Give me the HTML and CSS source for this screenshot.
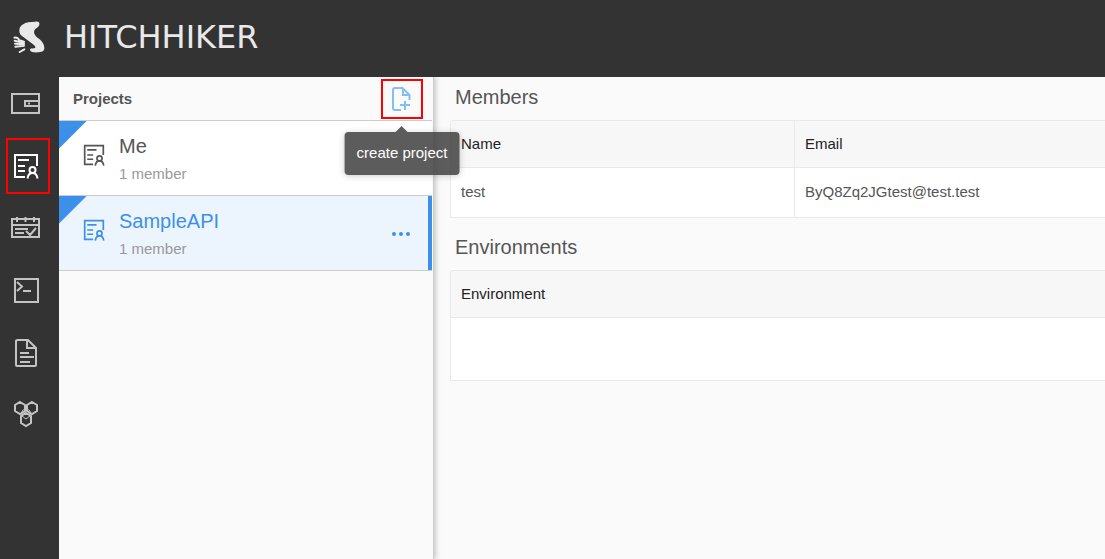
FILE: index.html
```html
<!DOCTYPE html>
<html lang="en">
<head>
<meta charset="utf-8">
<title>Hitchhiker</title>
<link rel="stylesheet" href="styles.css">
</head>
<body>
<svg class="defs" aria-hidden="true">
  <symbol id="project" viewBox="0 0 26 26">
    <path d="M12 24H2V2H24V13M5 7H16M5 13H12M5 18H12"/>
    <circle cx="19.500" cy="17" r="3"/>
    <path d="M14.500 25.500C15 22 17 20 19.500 20S24 22 24.500 25.500"/>
  </symbol>
</svg>
<header class="header">
  <svg class="logo" viewBox="38 29 96 99" aria-hidden="true">
    <path d="M57 58C56 41 73 31 104 31C116 30 118 33 117 40C116 46 111 48 105 53C98 60 101 72 113 80C124 88 131 97 132 108C133 119 127 122 115 123C103 124 91 123 89 117C88 111 95 112 102 111C108 109 105 105 98 99L66 75C60 70 57 66 57 58Z"/>
    <path class="fingers" d="M42 79Q52 77 57 87L71 91M43 88L71 95M44 97L71 99M45 106L71 103M58 122L72 114"/>
  </svg>
  <span class="brand">HITCHHIKER</span>
</header>
<div class="body">
  <nav class="nav">
    <button class="nav-item" aria-label="Collections"><svg width="30" height="22" viewBox="0 0 30 22"><path d="M1 1H28V20H1ZM28 8H14V13H28"/><path d="M17 10.500H19"/></svg></button>
    <button class="nav-item active" aria-label="Projects"><svg width="26" height="26"><use href="#project"/></svg></button>
    <button class="nav-item" aria-label="Schedule"><svg width="30" height="22" viewBox="0 0 30 22"><path d="M1 2H28V20H1ZM1 8H28M6 0V5M14.500 0V5M23 0V5M4 12H17M4 16H13M15 14L19 18L25 11"/></svg></button>
    <button class="nav-item" aria-label="Stress test"><svg width="26" height="26" viewBox="0 0 26 26"><path d="M2 2H25V25H2ZM4 5L9 9.500L4 14M10 14H18"/></svg></button>
    <button class="nav-item" aria-label="Documents"><svg width="23" height="29" viewBox="0 0 23 29"><path d="M3 2H13L21 10V27Q21 28 20 28H2Q1 28 1 27V3Q1 2 3 2ZM12 2V10H21M5 15H14M5 19H19M5 24H15"/></svg></button>
    <button class="nav-item" aria-label="Community"><svg width="28" height="28" viewBox="0 0 28 28"><path d="M8 2L13 5V11L8 14L3 11V5ZM20 2L25 5V11L20 14L15 11V5ZM14 13L19 16V23L14 26L9 23V16Z"/><path class="thin" d="M10 16V11L14 8L18 11V16L14 19Z"/></svg></button>
  </nav>
  <aside class="panel">
    <div class="panel-head">
      <h1 class="panel-title">Projects</h1>
      <div class="create-wrap">
        <button class="create" aria-label="create project" aria-describedby="create-tip"><svg width="20" height="24" viewBox="0 0 20 24"><path d="M9 23H3Q1 23 1 21V3Q1 1 3 1H10.500L17.500 8V13M11 1V8H18M13 14V23M8 18H18"/></svg></button>
        <div class="tooltip" id="create-tip" role="tooltip">create project</div>
      </div>
    </div>
    <ul class="projects">
      <li class="project">
        <svg class="project-icon" width="22" height="22"><use href="#project"/></svg>
        <div class="project-text"><div class="project-name">Me</div><div class="project-info">1 member</div></div>
      </li>
      <li class="project selected">
        <svg class="project-icon" width="22" height="22"><use href="#project"/></svg>
        <div class="project-text"><div class="project-name">SampleAPI</div><div class="project-info">1 member</div></div>
        <button class="more" aria-label="More"><svg width="20" height="4" viewBox="0 0 20 4"><circle cx="3" cy="2" r="2"/><circle cx="10" cy="2" r="2"/><circle cx="17" cy="2" r="2"/></svg></button>
      </li>
    </ul>
  </aside>
  <main class="main">
    <h2 class="section-title">Members</h2>
    <table class="table">
      <thead><tr><th class="first" scope="col">Name</th><th scope="col">Email</th></tr></thead>
      <tbody><tr><td>test</td><td>ByQ8Zq2JGtest@test.test</td></tr></tbody>
    </table>
    <h2 class="section-title">Environments</h2>
    <table class="table">
      <thead><tr><th scope="col">Environment</th></tr></thead>
      <tbody><tr><td class="empty"></td></tr></tbody>
    </table>
  </main>
</div>
</body>
</html>
```
FILE: styles.css
```css
* { box-sizing: border-box; }
body {
  margin: 0;
  min-height: 100vh;
  display: flex;
  flex-direction: column;
  background: #fafafa;
  color: #555;
  font: 15px/22px "Liberation Sans", Arial, sans-serif;
}
h1, h2, ul { margin: 0; padding: 0; font-weight: normal; }
button { border: 0; padding: 0; background: none; font: inherit; cursor: pointer; }
svg { display: block; fill: none; stroke: currentColor; stroke-width: 2; }
.thin { stroke-width: 1; }
.defs { position: absolute; width: 0; height: 0; }

.header {
  display: flex;
  align-items: center;
  gap: 19px;
  padding: 19px 13px 22px;
  background: #333;
  color: #e9e9e9;
}
.logo { width: 32px; height: 33px; fill: currentColor; stroke: none; }
.fingers { fill: none; stroke: currentColor; stroke-width: 6; stroke-linecap: round; }
.brand { font: 32px/36px "DejaVu Sans", sans-serif; }

.body { flex: 1; display: flex; }
.nav {
  flex: none;
  width: 59px;
  display: flex;
  flex-direction: column;
  gap: 10px;
  padding: 1px 11px 0 8px;
  background: #333;
}
.nav-item {
  height: 52px;
  display: flex;
  align-items: center;
  justify-content: center;
  padding-right: 4px;
  color: #c4c4c4;
}
.nav-item.active { color: #fff; outline: 2px solid #f00; }

.panel {
  flex: none;
  width: 375px;
  padding-right: 1px;
  position: relative;
  z-index: 1;
  background: #fafafa;
  border-right: 1px solid #ccc;
  box-shadow: 2px 0 5px rgba(0, 0, 0, .2);
  clip-path: inset(0 -40px 0 0);
}
.panel-head {
  height: 44px;
  display: flex;
  align-items: center;
  justify-content: space-between;
  padding: 0 9px 0 14px;
  border-bottom: 1px solid #ccc;
}
.panel-title { font-size: 15px; font-weight: bold; }
.create-wrap { position: relative; }
.create {
  width: 42px;
  height: 40px;
  display: flex;
  align-items: center;
  justify-content: center;
  border: 2px solid #f00;
  color: #83bff0;
}
.tooltip {
  position: absolute;
  z-index: 2;
  top: 100%;
  left: 50%;
  transform: translateX(-50%);
  margin-top: 13px;
  padding: 10px 12px 11px;
  border-radius: 4px;
  background: rgba(64, 64, 64, .85);
  box-shadow: 0 1px 6px rgba(0, 0, 0, .2);
  color: #fff;
  white-space: nowrap;
}
.tooltip::before {
  content: "";
  position: absolute;
  bottom: 100%;
  left: 50%;
  margin-left: -6px;
  border: 6px solid transparent;
  border-top: 0;
  border-bottom-color: rgba(64, 64, 64, .85);
}
.projects { list-style: none; }
.project {
  height: 75px;
  display: flex;
  padding: 11px 21px 0 24px;
  border-bottom: 1px solid #ccc;
  background: linear-gradient(135deg, #3d90ea 19px, transparent 20px) #fff;
}
.project-icon { margin: 12px 14px 0 0; }
.project-name { font-size: 20px; line-height: 28px; }
.project-info { line-height: 28px; color: #999; }
.project-text { flex: 1; }
.selected {
  background-color: #ecf5fd;
  color: #3d90ea;
  box-shadow: inset -4px 0 #3d90ea;
}
.more { align-self: flex-start; padding: 25px 0; color: #3d90ea; }
.more svg { fill: currentColor; stroke: none; }

.main { flex: 1; min-width: 0; padding: 5px 0 0 16px; overflow: hidden; }
.section-title {
  padding-left: 5px;
  font-size: 20px;
  line-height: 30px;
  margin-bottom: 8px;
}
.table {
  width: 100%;
  margin-bottom: 14px;
  border: 1px solid #e9e9e9;
  border-right: 0;
  border-bottom: 0;
  border-radius: 4px 0 0 0;
  border-spacing: 0;
  background: #fff;
}
.table th, .table td {
  padding: 12px 10px;
  border-bottom: 1px solid #e9e9e9;
  text-align: left;
  font-weight: normal;
}
.table th { background: #f7f7f7; color: #222; }
.table th:first-child { border-radius: 4px 0 0 0; }
.table td { padding: 13px 10px 14px; }
.table th + th, .table td + td { border-left: 1px solid #e9e9e9; }
.table .first { width: 343px; }
.table .empty { height: 63px; }
```
